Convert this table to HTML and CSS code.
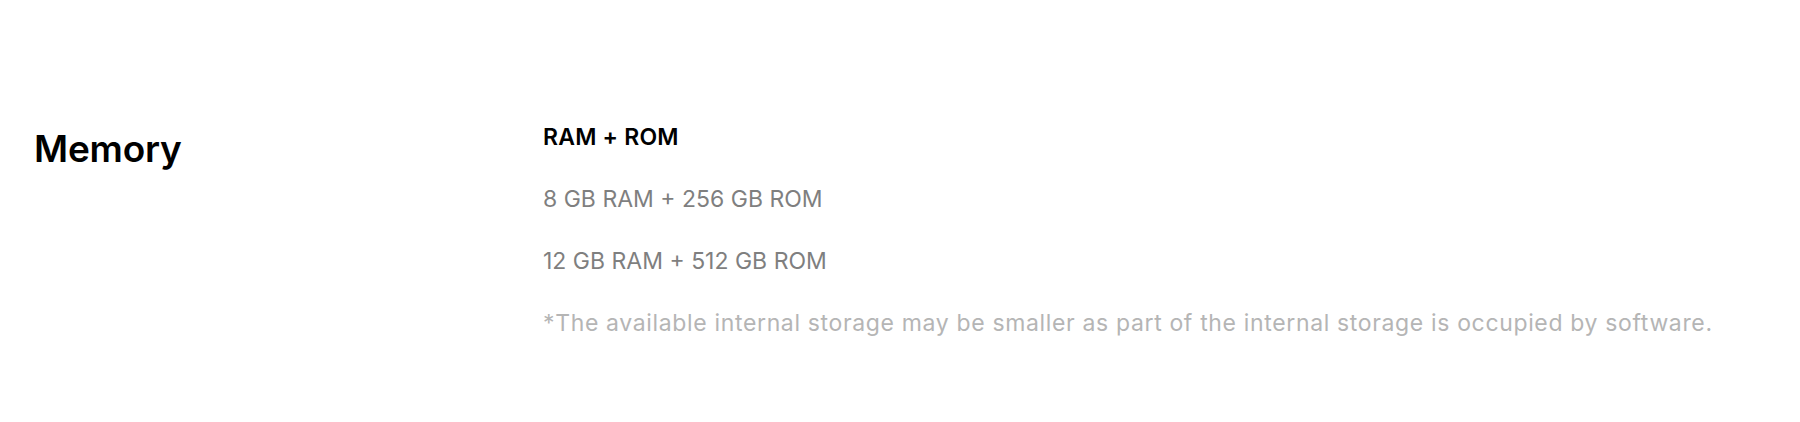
FILE: index.html
```html
<!DOCTYPE html>
<html lang="en">
<head>
<meta charset="utf-8">
<title>Memory</title>
<link rel="stylesheet" href="styles.css">
</head>
<body>
<section class="spec">
  <div class="spec-title">
    <h2>Memory</h2>
  </div>
  <div class="spec-body">
    <h3 class="spec-label">RAM + ROM</h3>
    <p class="spec-value">8 GB RAM + 256 GB ROM</p>
    <p class="spec-value">12 GB RAM + 512 GB ROM</p>
    <p class="spec-note">*The available internal storage may be smaller as part of the internal storage is occupied by software.</p>
  </div>
</section>
</body>
</html>
```
FILE: styles.css
```css
html, body {
  margin: 0;
  padding: 0;
  background: #fff;
}
body {
  font-family: Inter, "Noto Sans", "Liberation Sans", sans-serif;
  -webkit-font-smoothing: antialiased;
}
.spec {
  display: grid;
  grid-template-columns: 509px 1fr;
  padding: 121px 0 0 34px;
}
.spec-title h2 {
  margin: 4px 0 0;
  font-size: 37px;
  line-height: 48px;
  font-weight: 600;
  color: #000;
  letter-spacing: -0.2px;
}
.spec-body {
  display: flex;
  flex-direction: column;
  gap: 30px;
}
.spec-label, .spec-value, .spec-note {
  margin: 0;
  font-size: 23px;
  line-height: 32px;
  white-space: nowrap;
}
.spec-label {
  font-weight: 600;
  color: #000;
  letter-spacing: 0.2px;
}
.spec-value {
  font-weight: 400;
  color: #7f7f7f;
}
.spec-note {
  color: #b5b5b5;
  letter-spacing: 0.65px;
}
```
